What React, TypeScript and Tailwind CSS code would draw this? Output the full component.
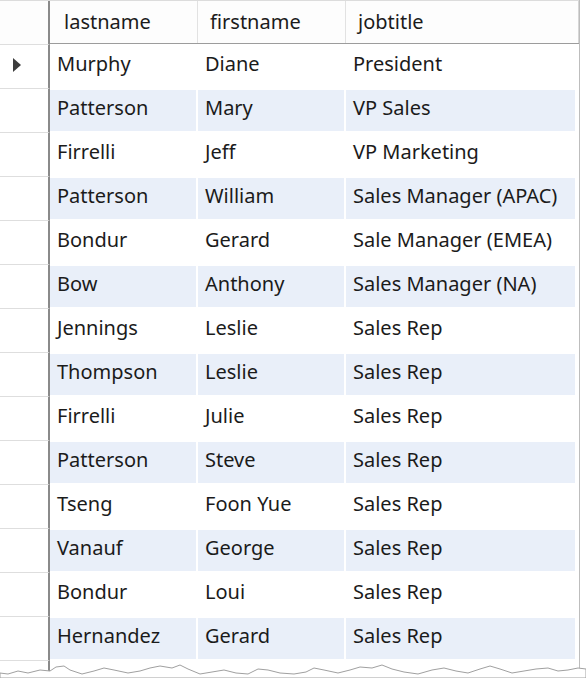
import React from "react";

const rows: [string, string, string][] = [
  ["Murphy", "Diane", "President"],
  ["Patterson", "Mary", "VP Sales"],
  ["Firrelli", "Jeff", "VP Marketing"],
  ["Patterson", "William", "Sales Manager (APAC)"],
  ["Bondur", "Gerard", "Sale Manager (EMEA)"],
  ["Bow", "Anthony", "Sales Manager (NA)"],
  ["Jennings", "Leslie", "Sales Rep"],
  ["Thompson", "Leslie", "Sales Rep"],
  ["Firrelli", "Julie", "Sales Rep"],
  ["Patterson", "Steve", "Sales Rep"],
  ["Tseng", "Foon Yue", "Sales Rep"],
  ["Vanauf", "George", "Sales Rep"],
  ["Bondur", "Loui", "Sales Rep"],
  ["Hernandez", "Gerard", "Sales Rep"],
  ["", "", ""],
];

function TornEdge() {
  return (
    <svg
      className="absolute left-0 bottom-0"
      width="586"
      height="16"
      viewBox="0 0 586 16"
    >
      <path
        d="M0 16 L0 11 L8 12 L18 9 L28 11 L40 8 L50 9 L56 5 L64 4 L70 8 L82 12 L94 9 L104 6 L114 8 L128 11 L140 9 L150 6 L160 4 L172 6 L180 3 L188 7 L200 12 L212 10 L224 8 L236 11 L248 12 L258 7 L268 8 L280 11 L294 12 L306 10 L314 6 L324 8 L338 11 L350 8 L360 5 L372 6 L382 3 L392 7 L404 10 L418 12 L432 8 L444 6 L456 9 L468 11 L480 7 L490 4 L500 7 L512 11 L524 9 L536 7 L548 6 L558 9 L568 8 L578 6 L586 7 L586 16 Z"
        fill="#ffffff"
        stroke="#a0a0a0"
        strokeWidth="1"
      />
    </svg>
  );
}

export default function App() {
  return (
    <div
      className="relative w-[586px] h-[678px] overflow-hidden bg-white text-[20px] text-[#1b1b1b]"
      style={{ fontFamily: '"Noto Sans", "Open Sans", sans-serif' }}
    >
      <div className="w-[580px] border-r border-[#bdbdbd]">
        {/* header */}
        <div className="flex h-[44px] border-t border-[#dcdcdc] bg-[#fdfdfd]">
          <div className="w-[50px] shrink-0 border-r-2 border-[#8a8a8a]" />
          <div className="flex flex-1 border-b border-[#9c9c9c]">
            <div className="w-[148px] shrink-0 flex items-center pl-[14px] pb-[1px] border-r border-[#e2e2e2]">
              lastname
            </div>
            <div className="w-[148px] shrink-0 flex items-center pl-[12px] pb-[1px] border-r border-[#e2e2e2]">
              firstname
            </div>
            <div className="flex-1 flex items-center pl-[12px] pb-[1px] border-r border-[#d6d6d6]">
              jobtitle
            </div>
          </div>
        </div>

        {rows.map((r, i) => (
          <div key={i} className="flex h-[44px]">
            <div className="w-[50px] shrink-0 flex items-center pl-[12px] pb-[3px] border-r-2 border-[#8a8a8a] border-t border-t-[#dedede]">
              {i === 0 && (
                <svg width="10" height="16" viewBox="0 0 10 16">
                  <path d="M1 1 L9 8 L1 15 Z" fill="#3c3c3c" />
                </svg>
              )}
            </div>
            <div className="flex flex-1 pt-[2px] pr-[4px]">
              {r.map((c, j) => (
                <div
                  key={j}
                  className={
                    (j === 2 ? "flex-1 " : "w-[146px] mr-[2px] ") +
                    "flex items-center pl-[7px] pb-[5px] h-[41px] " +
                    (i % 2 === 1 ? "bg-[#e9eff9]" : "bg-white")
                  }
                >
                  {c}
                </div>
              ))}
            </div>
          </div>
        ))}
      </div>
      <TornEdge />
    </div>
  );
}
